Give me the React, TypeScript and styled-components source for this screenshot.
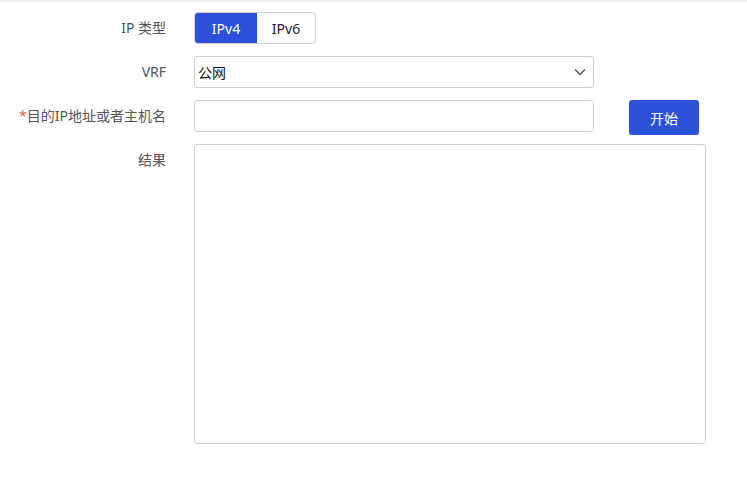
import React, { useState } from 'react';
import styled, { createGlobalStyle } from 'styled-components';

const GlobalStyle = createGlobalStyle`
    html, body {
        margin: 0;
        padding: 0;
        background: #fff;
        font-family: "Noto Sans", "Noto Sans CJK SC", sans-serif;
        font-size: 14px;
        color: #333;
    }
`;

const TopBar = styled.div`
    height: 2px;
    background: #f0f0f2;
`;

const Form = styled.div`
    display: flex;
    flex-direction: column;
    gap: 12px;
    padding-top: 10px;
`;

const Row = styled.div`
    display: flex;
    align-items: flex-start;
`;

const Label = styled.div`
    width: 166px;
    margin-right: 28px;
    flex-shrink: 0;
    text-align: right;
    line-height: 32px;
    color: #555;
    white-space: nowrap;

    .required {
        color: #e5633d;
    }
`;

const Segmented = styled.div`
    display: flex;
    height: 32px;
    border: 1px solid #cfcfcf;
    border-radius: 4px;
    overflow: hidden;
    box-sizing: border-box;
`;

const SegmentButton = styled.button<{ $active: boolean; $width: number }>`
    width: ${(p) => p.$width}px;
    border: none;
    margin: 0;
    padding: 0;
    font: inherit;
    cursor: pointer;
    background: ${(p) => (p.$active ? '#2c51d9' : '#fff')};
    color: ${(p) => (p.$active ? '#fff' : '#222')};
`;

const SelectBox = styled.div`
    width: 400px;
    height: 32px;
    box-sizing: border-box;
    border: 1px solid #cfcfcf;
    border-radius: 3px;
    display: flex;
    align-items: center;
    padding: 0 4px 0 3px;
    color: #111;

    span {
        flex: 1;
    }

    svg {
        margin-right: 3px;
    }
`;

const TextInput = styled.input`
    width: 400px;
    height: 32px;
    box-sizing: border-box;
    border: 1px solid #cfcfcf;
    border-radius: 3px;
    padding: 0 6px;
    font: inherit;
    outline: none;
`;

const PrimaryButton = styled.button`
    margin-left: 35px;
    margin-bottom: -3px;
    width: 70px;
    height: 35px;
    border: none;
    border-radius: 3px;
    background: #2c51d9;
    color: #fff;
    font: inherit;
    cursor: pointer;
`;

const ResultArea = styled.textarea`
    width: 512px;
    height: 300px;
    box-sizing: border-box;
    border: 1px solid #cfcfcf;
    border-radius: 3px;
    resize: none;
    outline: none;
    font: inherit;
    padding: 6px;
`;

export default function App() {
    const [ipType, setIpType] = useState<'v4' | 'v6'>('v4');

    return (
        <>
            <GlobalStyle />
            <TopBar />
            <Form>
                <Row>
                    <Label>IP 类型</Label>
                    <Segmented>
                        <SegmentButton $width={62} $active={ipType === 'v4'} onClick={() => setIpType('v4')}>
                            IPv4
                        </SegmentButton>
                        <SegmentButton $width={58} $active={ipType === 'v6'} onClick={() => setIpType('v6')}>
                            IPv6
                        </SegmentButton>
                    </Segmented>
                </Row>
                <Row>
                    <Label>VRF</Label>
                    <SelectBox>
                        <span>公网</span>
                        <svg width="12" height="8" viewBox="0 0 12 8">
                            <path d="M1 1.5 L6 6.5 L11 1.5" fill="none" stroke="#555" strokeWidth="1.5" />
                        </svg>
                    </SelectBox>
                </Row>
                <Row>
                    <Label>
                        <span className="required">*</span>目的IP地址或者主机名
                    </Label>
                    <TextInput />
                    <PrimaryButton>开始</PrimaryButton>
                </Row>
                <Row>
                    <Label>结果</Label>
                    <ResultArea readOnly />
                </Row>
            </Form>
        </>
    );
}
